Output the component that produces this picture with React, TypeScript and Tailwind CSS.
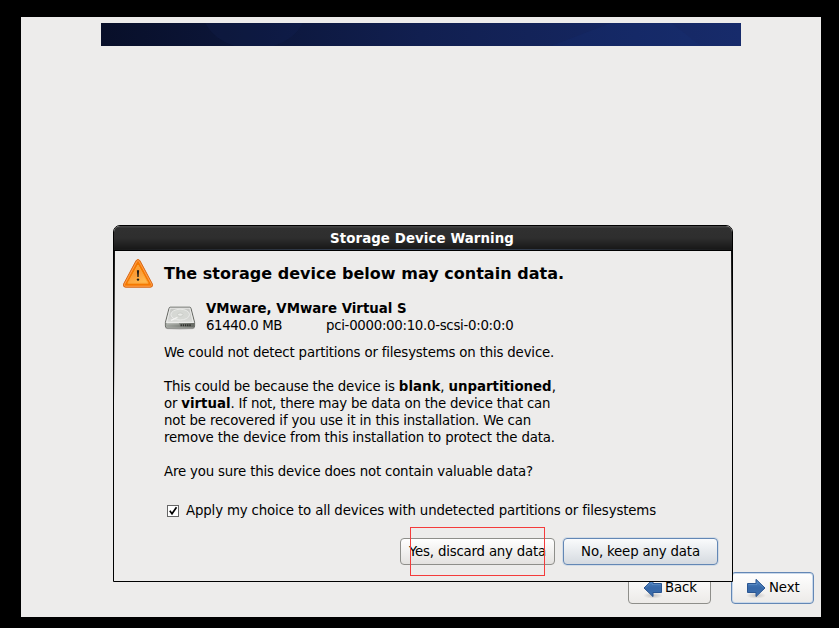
import React from "react";

function WarningIcon() {
  return (
    <svg width="32" height="32" viewBox="0 0 32 32" className="block">
      <defs>
        <linearGradient id="warnFill" x1="0" y1="0" x2="0.6" y2="1">
          <stop offset="0" stopColor="#fcaf3e" />
          <stop offset="0.5" stopColor="#fb9a36" />
          <stop offset="1" stopColor="#ffb84d" />
        </linearGradient>
      </defs>
      <ellipse cx="16" cy="29" rx="14" ry="1.1" fill="#000" opacity="0.1" />
      <path d="M14.1 2.6 Q16 .2 17.9 2.6 L30.4 26 Q31.2 29 28.6 29.2 H3.4 Q.8 29 1.6 26 Z" fill="#f57900" stroke="#d96b1c" strokeWidth="1" />
      <path d="M15 3.2 Q16 1.8 17 3.2 L29.4 26.2 Q29.8 28 28.4 28.2 H3.6 Q2.2 28 2.6 26.2 Z" fill="none" stroke="#fda052" strokeWidth="1" />
      <path d="M16 7 L26.2 25.2 H5.8 Z" fill="url(#warnFill)" stroke="#fba53b" strokeWidth="1" strokeLinejoin="round" />
      <path d="M14.9 12.6 Q16 11.6 17.1 12.6 L16.6 19 H15.4 Z" fill="#1c1b18" />
      <circle cx="16" cy="21.6" r="1.2" fill="#1c1b18" />
    </svg>
  );
}

function DriveIcon() {
  return (
    <svg width="32" height="32" viewBox="0 0 32 32" className="block">
      <defs>
        <linearGradient id="driveTop" x1="0" y1="0" x2="0" y2="1">
          <stop offset="0" stopColor="#c3c4c1" />
          <stop offset="1" stopColor="#e4e5e2" />
        </linearGradient>
        <linearGradient id="driveFront" x1="0" y1="0" x2="1" y2="0">
          <stop offset="0" stopColor="#a4a8a2" />
          <stop offset="1" stopColor="#666963" />
        </linearGradient>
      </defs>
      <ellipse cx="16" cy="27.2" rx="14.8" ry="1.6" fill="#000" opacity="0.16" />
      <path d="M6.2 6.2 H25.8 Q26.7 6.2 27 7.4 L30.6 21.4 V25 Q30.6 27 29 27 H3 Q1.4 27 1.4 25 V21.4 L5 7.4 Q5.3 6.2 6.2 6.2Z" fill="url(#driveTop)" stroke="#656762" />
      <path d="M1.9 22 H30.1 V25 Q30.1 26.4 29 26.4 H3 Q1.9 26.4 1.9 25Z" fill="url(#driveFront)" />
      <path d="M6.2 7.2 H25.8 L29.3 21.4 H2.7Z" fill="none" stroke="#f3f3f1" strokeWidth=".8" />
      <ellipse cx="16.2" cy="13.6" rx="9.3" ry="5.4" fill="#d6d8d4" stroke="#ebecea" strokeWidth=".9" />
      <ellipse cx="16.2" cy="13.6" rx="2.8" ry="1.6" fill="#e9eae7" stroke="#c0c2be" strokeWidth=".6" />
      <path d="M7 19.4 L13.5 16.4" stroke="#f3f3f1" strokeWidth="1.2" />
      <path d="M16.5 24.2 H27" stroke="#2c2d2a" strokeWidth="2" strokeDasharray="1.4 .8" />
      <path d="M3 22.8 H15" stroke="#c9ccc6" strokeWidth=".8" />
    </svg>
  );
}

function ArrowIcon({ back = false }: { back?: boolean }) {
  return (
    <svg width="20" height="20" viewBox="0 0 20 20" className="block shrink-0 overflow-visible">
      <defs>
        <linearGradient id={back ? "arrowBack" : "arrowNext"} x1="0" y1="0" x2="0" y2="1">
          <stop offset="0" stopColor="#4f86c4" />
          <stop offset=".5" stopColor="#3768a8" />
          <stop offset="1" stopColor="#3b6eae" />
        </linearGradient>
        <radialGradient id={back ? "shadeBack" : "shadeNext"}>
          <stop offset="0" stopColor="#000" stopOpacity=".2" />
          <stop offset="1" stopColor="#000" stopOpacity="0" />
        </radialGradient>
      </defs>
      <ellipse cx="10" cy="17.5" rx="10" ry="3.2" fill={back ? "url(#shadeBack)" : "url(#shadeNext)"} />
      <g transform={back ? "matrix(-1 0 0 1 20 0)" : undefined}>
        <path d="M1.5 5.5 H10 V1.3 L19 10 L10 18.6 V14.5 H1.5 Z" fill={back ? "url(#arrowBack)" : "url(#arrowNext)"} stroke="#2a5591" strokeLinejoin="round" />
        <path d="M2.5 6.5 H11 V3.7 L17.6 10" fill="none" stroke="#7fa9d8" strokeWidth=".7" opacity=".5" />
      </g>
    </svg>
  );
}

const bodyText = "block w-max whitespace-pre text-[13.333px] leading-[17px]";
const bold = "font-bold tracking-normal";

export default function App() {
  return (
    <div className="relative h-[628px] w-[839px] overflow-hidden bg-black pt-[17px] pl-[21px] font-['DejaVu_Sans',sans-serif] text-black">
      <main className="flex h-[600px] w-[800px] flex-col justify-between bg-[#edeceb] pt-1.5">
        <div className="ml-20 h-[23px] w-[640px] bg-linear-to-r from-[#080f29] via-[#111f50] to-[#172b6b]">
          <svg width="640" height="23" className="block">
            <ellipse cx="153" cy="-14" rx="52" ry="40" fill="#1c3c88" opacity=".09" />
            <path d="M510 0 H570 L600 23 H450Z" fill="#1c3c88" opacity=".12" />
          </svg>
        </div>
        <footer className="flex justify-end gap-5 pr-[7px] pb-[13px]">
          <button className="flex h-8 w-[83px] items-center rounded-[4px] border border-[#8e8e8a] bg-linear-to-b from-white to-[#eceae8] pl-3.5 text-[13.333px]">
            <ArrowIcon back />
            <span className="-mt-px ml-0.5 tracking-[-0.1px]">Back</span>
          </button>
          <button className="flex h-8 w-[83px] items-center rounded-[4px] border border-[#6387b5] bg-linear-to-b from-white to-[#eceae8] pl-3.5 text-[13.333px] shadow-[inset_0_0_0_1px_#c9d8ea]">
            <ArrowIcon />
            <span className="-mt-px ml-[3px] tracking-[-0.1px]">Next</span>
          </button>
        </footer>
      </main>

      <section className="absolute top-[225px] left-[113px] h-[357px] w-[620px] overflow-hidden rounded-t-[7px] border border-black bg-[#edeceb]">
        <header className="flex h-[25px] flex-col border-b border-black bg-[linear-gradient(#4a4a4a,#303030_10%,#2e2e2e_50%,#161616)]">
          <h1 className="mt-1 h-[19px] pr-0.5 text-center text-[13.333px] leading-[17px] font-bold tracking-[0.1px] whitespace-nowrap text-white">Storage Device Warning</h1>
          <div className="h-px bg-linear-to-r from-[#1a1a1a] via-[#3d4d66] to-[#1a1a1a]" />
        </header>
        <div className="flex h-[330px] pt-[7px] pl-2">
          <WarningIcon />
          <div className="ml-[10px] flex flex-col items-start">
            <h2 className="mt-1.5 h-5 text-base leading-5 font-bold tracking-[0.02px] whitespace-nowrap">The storage device below may contain data.</h2>
            <div className="mt-[17px] flex h-[34px]">
              <DriveIcon />
              <div className="-mt-px ml-2.5">
                <span className={`${bodyText} font-bold tracking-[0.02px]`}>VMware, VMware Virtual S</span>
                <div className="flex">
                  <span className={`${bodyText} tracking-[-0.4px]`}>61440.0 MB</span>
                  <span className={`${bodyText} ml-11 tracking-[-0.29px]`}>pci-0000:00:10.0-scsi-0:0:0:0</span>
                </div>
              </div>
            </div>
            <div className="mt-[9px]">
              <span className={`${bodyText} tracking-[-0.175px]`}>We could not detect partitions or filesystems on this device.</span>
              <div className="mt-[17px]">
                <span className={`${bodyText} tracking-[-0.19px]`}>This could be because the device is <b className={bold}>blank</b>, <b className={bold}>unpartitioned</b>,</span>
                <span className={`${bodyText} tracking-[-0.2px]`}>or <b className={bold}>virtual</b>. If not, there may be data on the device that can</span>
                <span className={`${bodyText} tracking-[-0.155px]`}>not be recovered if you use it in this installation. We can</span>
                <span className={`${bodyText} tracking-[-0.16px]`}>remove the device from this installation to protect the data.</span>
              </div>
              <span className={`${bodyText} mt-[17px] tracking-[-0.18px]`}>Are you sure this device does not contain valuable data?</span>
            </div>
            <label className="mt-[22px] ml-[3px] flex h-[17px] items-start">
              <svg width="12" height="12" viewBox="0 0 12 12" className="mt-[3px]">
                <rect x=".5" y=".5" width="11" height="11" fill="#fff" stroke="#666" />
                <path d="M2.8 5.8 L5 8.7 L9.5 2.3" fill="none" stroke="#000" strokeWidth="1.7" />
              </svg>
              <span className={`${bodyText} ml-[7px] tracking-[-0.15px]`}>Apply my choice to all devices with undetected partitions or filesystems</span>
            </label>
            <div className="mt-[19px] ml-[236px] flex gap-2">
              <button className="flex h-[27px] w-[155px] items-center justify-center rounded-[4px] border border-[#8e8e8a] bg-linear-to-b from-white to-[#e4e2e0]">
                <span className={`${bodyText} tracking-[-0.2px]`}>Yes, discard any data</span>
              </button>
              <button className="flex h-[27px] w-[155px] items-center justify-center rounded-[4px] border border-[#6387b5] bg-linear-to-b from-[#fafbfc] to-[#d5dae0] shadow-[0_0_0_1px_#d3dce6]">
                <span className={`${bodyText} tracking-[-0.17px]`}>No, keep any data</span>
              </button>
            </div>
          </div>
        </div>
        <div className="absolute top-[25px] left-0 h-[150px] w-px bg-linear-to-b from-[#111] to-[#edeceb]" />
        <div className="absolute top-[25px] right-0 h-[150px] w-px bg-linear-to-b from-[#111] to-[#edeceb]" />
      </section>
      <div className="absolute top-[527px] left-[410px] h-[49px] w-[135px] border border-[#f43b3b]" />
    </div>
  );
}
